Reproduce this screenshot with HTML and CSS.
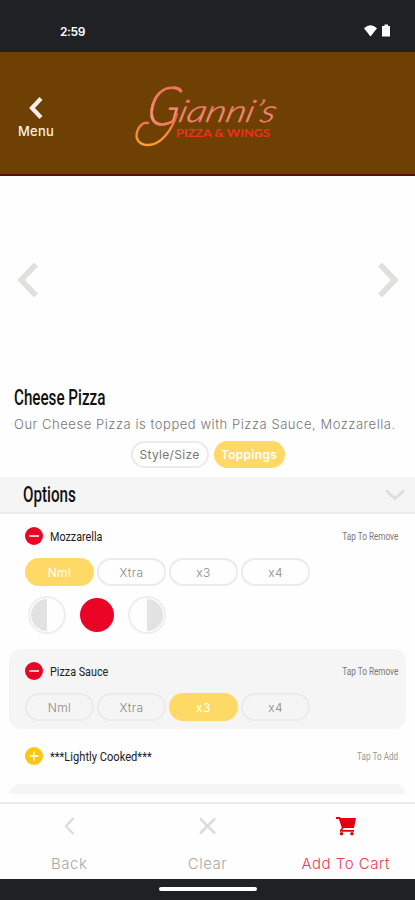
FILE: index.html
```html
<!DOCTYPE html>
<html lang="en">
<head>
    <meta charset="UTF-8">
    <meta name="viewport" content="width=device-width, initial-scale=1.0">
    <title>Gianni's Pizza &amp; Wings</title>
    <link rel="stylesheet" href="styles.css">
</head>
<body>

<div class="status-bar">
    <span class="time">2:59</span>
    <svg class="status-icons" width="30" height="16" viewBox="0 0 30 16">
        <path d="M1 5.2Q7.500 -0.500 14 5.200L7.500 13.500Z" fill="#fff"/>
        <path d="M21.500 1.500h3.500v1.500h2v10.500h-8v-10.500h2.500z" fill="#fff"/>
    </svg>
</div>

<header class="header">
    <a class="menu-link" href="#">
        <svg width="18" height="24" viewBox="0 0 18 24"><path d="M14 2.500L5 12l9 9.500" fill="none" stroke="#fbeee8" stroke-width="4.200"/></svg>
        <span>Menu</span>
    </a>
    <svg class="logo" width="160" height="86" viewBox="0 -11 160 86">
        <defs>
            <linearGradient id="script" x1="0" y1="0" x2="0" y2="1">
                <stop offset="0" stop-color="#ee5a50"/>
                <stop offset="0.7" stop-color="#f8967c"/>
                <stop offset="1" stop-color="#f24a2c"/>
            </linearGradient>
            <linearGradient id="swash" x1="0" y1="0" x2="0" y2="1">
                <stop offset="0" stop-color="#f0604c"/>
                <stop offset="1" stop-color="#ffa030"/>
            </linearGradient>
        </defs>
        <text class="logo-initial" transform="translate(14 45) skewX(-10)" textLength="33" lengthAdjust="spacingAndGlyphs" fill="url(#script)">G</text>
        <text class="logo-script" transform="translate(46 42) skewX(-14)" textLength="97" lengthAdjust="spacingAndGlyphs" fill="url(#script)">ianni’s</text>
        <path d="M46 34C41 50 30 65 17 65C9 65 4 60 6 52C8 45 13 42 17 43" fill="none" stroke="url(#swash)" stroke-width="2.400" stroke-linecap="round"/>
        <text class="logo-sub" x="45" y="57" textLength="94" lengthAdjust="spacingAndGlyphs" fill="#f0301c">PIZZA &amp; WINGS</text>
    </svg>
</header>

<main>
    <section class="carousel">
        <svg width="24" height="40" viewBox="0 0 24 40"><path d="M21 4.500L6 20l15 15.500" fill="none" stroke="#dfdfde" stroke-width="5.500"/></svg>
        <svg width="24" height="40" viewBox="0 0 24 40"><path d="M4 4.500l15 15.500L4 35.500" fill="none" stroke="#dfdfde" stroke-width="5.500"/></svg>
    </section>

    <section class="product">
        <h1><span class="narrow">Cheese Pizza</span></h1>
        <p>Our Cheese Pizza is topped with Pizza Sauce, Mozzarella.</p>
        <div class="tabs">
            <button class="tab">Style/Size</button>
            <button class="tab tab--active">Toppings</button>
        </div>
    </section>

    <div class="options-bar">
        <h2><span class="narrow">Options</span></h2>
        <svg width="22" height="14" viewBox="0 0 22 14"><path d="M2 2.500l9 8 9-8" fill="none" stroke="#dededf" stroke-width="3"/></svg>
    </div>

    <div class="toppings">
        <div class="topping topping--split">
            <div class="topping-row">
                <svg class="mark" viewBox="0 0 18 18"><circle cx="9" cy="9" r="9" fill="#ea0527"/><path d="M4 9h10" stroke="#fff" stroke-width="1.500"/></svg>
                <span class="name">Mozzarella</span>
                <span class="hint">Tap To Remove</span>
            </div>
            <div class="amounts">
                <button class="amount amount--active">Nml</button>
                <button class="amount">Xtra</button>
                <button class="amount">x3</button>
                <button class="amount">x4</button>
            </div>
            <div class="halves">
                <span class="half"><i class="left"></i></span>
                <span class="half half--whole"></span>
                <span class="half"><i class="right"></i></span>
            </div>
        </div>

        <div class="topping topping--grey">
            <div class="topping-row">
                <svg class="mark" viewBox="0 0 18 18"><circle cx="9" cy="9" r="9" fill="#ea0527"/><path d="M4 9h10" stroke="#fff" stroke-width="1.500"/></svg>
                <span class="name">Pizza Sauce</span>
                <span class="hint">Tap To Remove</span>
            </div>
            <div class="amounts">
                <button class="amount">Nml</button>
                <button class="amount">Xtra</button>
                <button class="amount amount--active">x3</button>
                <button class="amount">x4</button>
            </div>
        </div>

        <div class="topping topping--single">
            <div class="topping-row">
                <svg class="mark" viewBox="0 0 18 18"><circle cx="9" cy="9" r="9" fill="#fdc60f"/><path d="M4.500 9h9M9 4.500v9" stroke="#fff3c4" stroke-width="1.800"/></svg>
                <span class="name name--wide">***Lightly Cooked***</span>
                <span class="hint hint--add">Tap To Add</span>
            </div>
        </div>

        <div class="topping topping--next"></div>
    </div>
</main>

<nav class="bottom-nav">
    <a href="#">
        <svg width="22" height="22" viewBox="0 0 22 22"><path d="M15.500 3L8 11l7.500 8" fill="none" stroke="#dcdcdc" stroke-width="2.500"/></svg>
        <span>Back</span>
    </a>
    <a href="#">
        <svg width="22" height="22" viewBox="0 0 22 22"><path d="M4 3.500l15 15M19 3.500l-15 15" fill="none" stroke="#dcdcdc" stroke-width="2.500"/></svg>
        <span>Clear</span>
    </a>
    <a class="cart" href="#">
        <svg width="22" height="22" viewBox="0 0 22 22">
            <path d="M1 3h3.500l3.500 10.500M5 15.800H19" fill="none" stroke="#e3000b" stroke-width="1.800"/>
            <path d="M4.500 3H21l-2 10H7.500zM5 15l2-2.500h1.500L7 15.500z" fill="#e3000b"/>
            <circle cx="6.500" cy="18.700" r="1.800" fill="#e3000b"/>
            <circle cx="17" cy="18.700" r="1.800" fill="#e3000b"/>
        </svg>
        <span>Add To Cart</span>
    </a>
</nav>

<div class="home-bar"><span></span></div>

</body>
</html>
```
FILE: styles.css
```css
* {
    margin: 0;
    padding: 0;
    box-sizing: border-box;
}

body {
    display: flex;
    flex-direction: column;
    width: 415px;
    height: 900px;
    overflow: hidden;
    background-color: #fefefe;
    font-family: "Inter", sans-serif;
}

a {
    text-decoration: none;
}

svg {
    display: block;
}

.status-bar {
    display: flex;
    justify-content: space-between;
    height: 52px;
    padding: 23px 22px 0 60px;
    background-color: #202124;
}

.time {
    color: #fff;
    font-size: 12px;
    font-weight: 600;
    line-height: 17px;
    letter-spacing: -0.4px;
}

.header {
    display: flex;
    align-items: flex-start;
    height: 124px;
    border-bottom: 2px solid #590f08;
    background-color: #6e4003;
}

.menu-link {
    display: flex;
    flex-direction: column;
    align-items: center;
    width: 72px;
    margin-top: 44px;
    color: #f7efe8;
    font-size: 13px;
    font-weight: 500;
    line-height: 16px;
    letter-spacing: 0.2px;
}

.menu-link span {
    margin-top: 3px;
}

.logo {
    margin: 17px 0 0 59px;
    overflow: visible;
}

.logo-initial {
    font: italic 300 54px "Lato", sans-serif;
    stroke: #f4806c;
    stroke-width: 0.5px;
}

.logo-script {
    font: italic 300 31px "Lato", sans-serif;
    stroke: #f4806c;
    stroke-width: 0.4px;
}

.logo-sub {
    font: 700 12px "Lato", sans-serif;
}

.carousel {
    display: flex;
    justify-content: space-between;
    align-items: center;
    height: 207px;
    padding: 0 15px;
}

.product {
    height: 94px;
    padding-left: 14px;
}

.narrow {
    display: inline-block;
    font-family: "Roboto", sans-serif;
    font-weight: 500;
    transform-origin: left center;
}

h1 {
    height: 29px;
    color: #111;
    font-size: 22px;
    line-height: 29px;
}

h1 .narrow {
    transform: scaleX(0.69);
}

.product p {
    color: #777;
    font-size: 13px;
    font-weight: 300;
    line-height: 25px;
    letter-spacing: 0.55px;
    white-space: nowrap;
}

.tabs {
    display: flex;
    justify-content: center;
    gap: 5px;
    margin-top: 4px;
    padding-right: 14px;
}

button {
    border: 2px solid #ebebeb;
    border-radius: 14px;
    background: none;
    font-family: "Inter", sans-serif;
    color: #888;
}

.tab {
    width: 78px;
    height: 27px;
    color: #777;
    font-size: 12px;
    letter-spacing: 0.3px;
    white-space: nowrap;
}

.tab--active {
    width: 71px;
    border: none;
    background-color: #ffd966;
    color: #fff;
    font-weight: 600;
}

.options-bar {
    display: flex;
    justify-content: space-between;
    align-items: center;
    height: 37px;
    padding: 0 9px 0 23px;
    border-bottom: 2px solid #ebebeb;
    background-color: #f5f5f5;
}

h2 {
    color: #111;
    font-size: 22px;
    line-height: 35px;
}

h2 .narrow {
    transform: scaleX(0.69);
}

.toppings {
    height: 280px;
    overflow: hidden;
    padding: 0 9px;
}

.topping {
    padding: 0 8px 0 16px;
}

.topping--split {
    height: 135px;
    padding-top: 13px;
}

.topping--grey {
    height: 80px;
    padding-top: 13px;
    border-radius: 12px;
    background-color: #f5f5f5;
}

.topping--single {
    height: 55px;
    padding-top: 18px;
}

.topping--next {
    height: 40px;
    border-radius: 12px;
    background-color: #f5f5f5;
}

.topping-row {
    display: flex;
    align-items: center;
    height: 18px;
}

.mark {
    width: 18px;
    height: 18px;
    margin-right: 7px;
}

.name {
    color: #222;
    font-family: "Roboto", sans-serif;
    font-size: 13px;
    transform: scaleX(0.83);
    transform-origin: left center;
}

.name--wide {
    transform: scaleX(0.855);
}

.hint {
    margin-left: auto;
    color: #777;
    font-family: "Roboto", sans-serif;
    font-size: 10px;
    transform: scaleX(0.82);
    transform-origin: right center;
}

.hint--add {
    color: #999;
}

.amounts {
    display: flex;
    gap: 3px;
    margin-top: 13px;
}

.amount {
    width: 69px;
    height: 28px;
    font-size: 12px;
    font-weight: 300;
    letter-spacing: 0.4px;
}

.amount--active {
    border-color: transparent;
    background-color: #ffd966;
    color: #fff;
    font-weight: 400;
}

.halves {
    display: flex;
    align-items: center;
    gap: 12px;
    margin: 10px 0 0 3px;
}

.half {
    display: flex;
    width: 38px;
    height: 38px;
    padding: 1px;
    border: 2px solid #eee;
    border-radius: 50%;
}

.half i {
    width: 16px;
    height: 32px;
    background-color: #e2e2e2;
}

.half .left {
    border-radius: 16px 0 0 16px;
}

.half .right {
    margin-left: auto;
    border-radius: 0 16px 16px 0;
}

.half--whole {
    width: 34px;
    height: 34px;
    margin: 0 2px;
    border: none;
    background-color: #ea0527;
}

.bottom-nav {
    display: flex;
    height: 77px;
    margin-top: 8px;
    border-top: 2px solid #ebebeb;
}

.bottom-nav a {
    display: flex;
    flex: 1;
    flex-direction: column;
    align-items: center;
    padding-top: 11px;
    color: #aaa9a4;
    font-size: 15px;
    font-weight: 300;
    line-height: 20px;
    letter-spacing: 0.5px;
}

.bottom-nav span {
    margin-top: 17px;
}

.bottom-nav .cart {
    color: #ec4055;
}

.home-bar {
    display: flex;
    justify-content: center;
    height: 21px;
    padding-top: 8px;
    background-color: #202124;
}

.home-bar span {
    width: 98px;
    height: 4px;
    border-radius: 2px;
    background-color: #fff;
}
```
